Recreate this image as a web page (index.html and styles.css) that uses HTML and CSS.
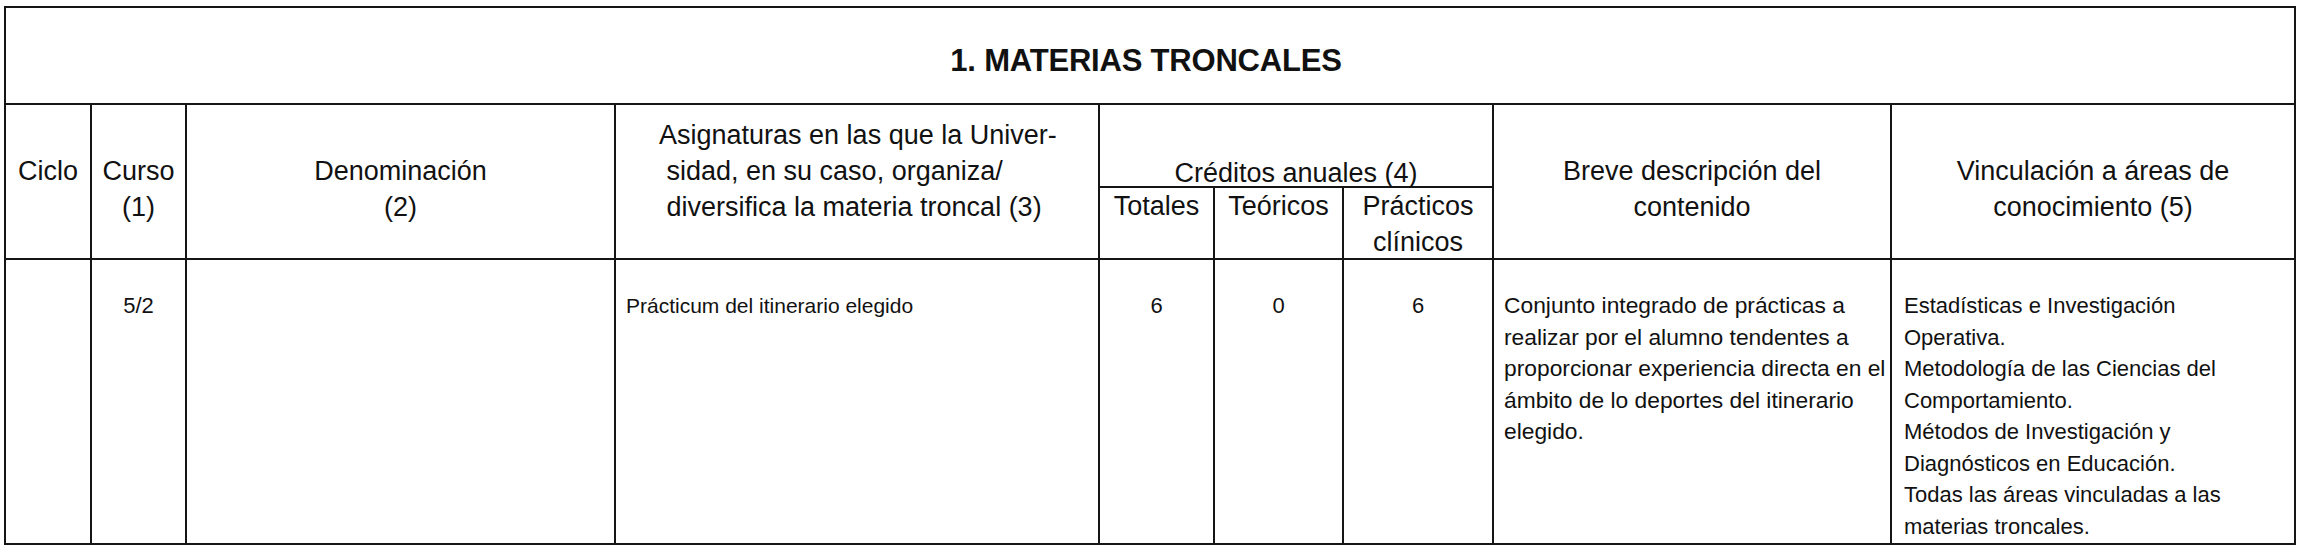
FILE: index.html
```html
<!DOCTYPE html>
<html lang="es">
<head>
<meta charset="utf-8">
<title>1. Materias troncales</title>
<link rel="stylesheet" href="styles.css">
</head>
<body>
<div class="sheet">
  <div class="grid">
    <div class="cell title">1. MATERIAS TRONCALES</div>

    <div class="cell head span2">Ciclo</div>
    <div class="cell head span2">Curso<br>(1)</div>
    <div class="cell head span2">Denominación<br>(2)</div>
    <div class="cell head span2 asig">Asignaturas en las que la Univer-<br>&nbsp;sidad, en su caso, organiza/<br>&nbsp;diversifica la materia troncal (3)</div>
    <div class="cell head cred">Créditos anuales (4)</div>
    <div class="cell head span2">Breve descripción del<br>contenido</div>
    <div class="cell head span2">Vinculación a áreas de<br>conocimiento (5)</div>
    <div class="cell head sub">Totales</div>
    <div class="cell head sub">Teóricos</div>
    <div class="cell head sub">Prácticos<br>clínicos</div>

    <div class="cell body"></div>
    <div class="cell body num">5/2</div>
    <div class="cell body"></div>
    <div class="cell body text asig-body">Prácticum del itinerario elegido</div>
    <div class="cell body num">6</div>
    <div class="cell body num">0</div>
    <div class="cell body num">6</div>
    <div class="cell body text breve-body">Conjunto integrado de prácticas a<br>realizar por el alumno tendentes a<br>proporcionar experiencia directa en el<br>ámbito de lo deportes del itinerario<br>elegido.</div>
    <div class="cell body text vinc">Estadísticas e Investigación<br>Operativa.<br>Metodología de las Ciencias del<br>Comportamiento.<br>Métodos de Investigación y<br>Diagnósticos en Educación.<br>Todas las áreas vinculadas a las<br>materias troncales.</div>
  </div>
</div>
</body>
</html>
```

FILE: styles.css
```css
html, body {
  margin: 0;
  padding: 0;
  background: #ffffff;
}

body {
  font-family: "Liberation Sans", Arial, sans-serif;
  color: #111111;
}

.sheet {
  padding: 6px 0 0 4px;
}

.grid {
  display: grid;
  grid-template-columns: 84px 93px 427px 482px 113px 127px 148px 396px 402px;
  grid-template-rows: 95px 81px 70px 283px;
  gap: 2px;
  padding: 2px;
  background: #151515;
  width: max-content;
}

.cell {
  background: #ffffff;
  overflow: visible;
}

.title {
  grid-column: 1 / -1;
  display: flex;
  align-items: center;
  justify-content: center;
  padding: 11px 8px 0 0;
  font-weight: bold;
  font-size: 31px;
  letter-spacing: -0.2px;
}

.head {
  font-size: 27px;
  line-height: 36px;
  text-align: center;
  white-space: nowrap;
}

.span2 {
  grid-row: span 2;
  padding-top: 48px;
}

.asig {
  text-align: left;
  padding-top: 12px;
  padding-left: 43px;
}

.cred {
  grid-column: span 3;
  display: flex;
  align-items: flex-end;
  justify-content: center;
  line-height: 26px;
}

.sub {
  padding-top: 0;
}

.body {
  font-size: 22px;
  line-height: 31.5px;
  padding-top: 30px;
  white-space: nowrap;
}

.num {
  text-align: center;
}

.text {
  padding-left: 10px;
}

.asig-body {
  font-size: 21px;
}

.breve-body {
  font-size: 22.8px;
}

.vinc {
  padding-left: 12px;
}
```
